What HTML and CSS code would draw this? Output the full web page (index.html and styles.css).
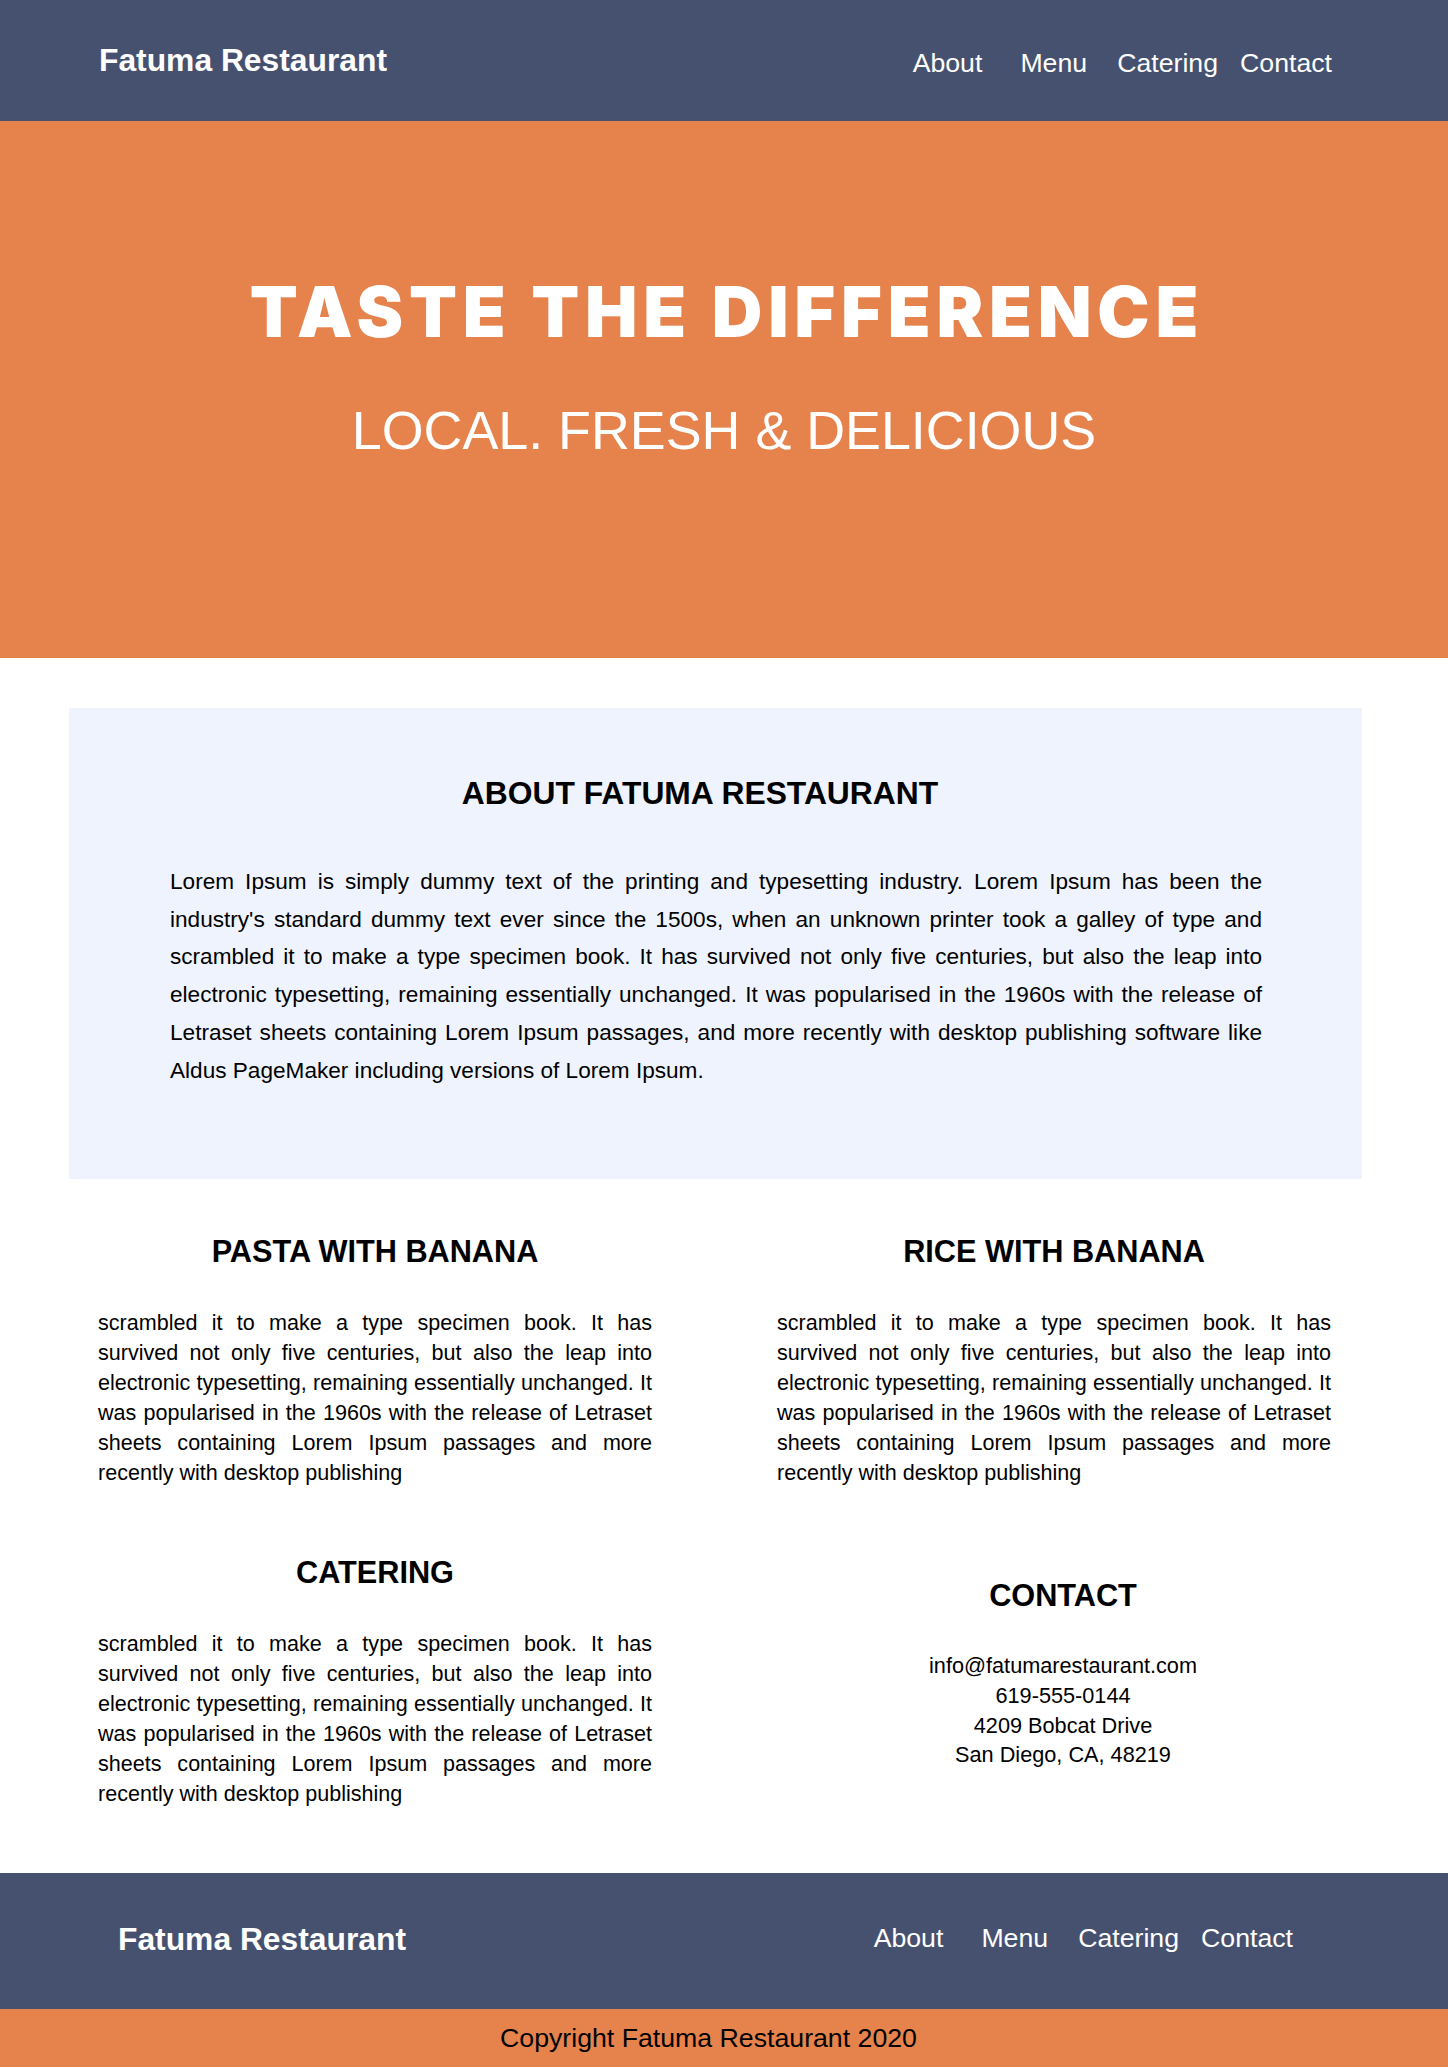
FILE: index.html
```html
<!DOCTYPE html>
<html lang="en">
<head>
<meta charset="utf-8">
<title>Fatuma Restaurant</title>
<link rel="stylesheet" href="styles.css">
</head>
<body>
<header class="topbar">
  <div class="brand">Fatuma Restaurant</div>
  <nav class="nav">
    <a class="nav-link" href="#">About</a>
    <a class="nav-link gap-a" href="#">Menu</a>
    <a class="nav-link gap-b" href="#">Catering</a>
    <a class="nav-link gap-c" href="#">Contact</a>
  </nav>
</header>

<section class="hero">
  <h1 class="hero-title">TASTE THE DIFFERENCE</h1>
  <p class="hero-sub">LOCAL. FRESH &amp; DELICIOUS</p>
</section>

<main class="content">
  <section class="about">
    <h2 class="about-title">ABOUT FATUMA RESTAURANT</h2>
    <p class="about-text">Lorem Ipsum is simply dummy text of the printing and typesetting industry. Lorem Ipsum has been the industry's standard dummy text ever since the 1500s, when an unknown printer took a galley of type and scrambled it to make a type specimen book. It has survived not only five centuries, but also the leap into electronic typesetting, remaining essentially unchanged. It was popularised in the 1960s with the release of Letraset sheets containing Lorem Ipsum passages, and more recently with desktop publishing software like Aldus PageMaker including versions of Lorem Ipsum.</p>
  </section>

  <div class="cards">
    <article class="card">
      <h3 class="card-title">PASTA WITH BANANA</h3>
      <p class="card-text">scrambled it to make a type specimen book. It has survived not only five centuries, but also the leap into electronic typesetting, remaining essentially unchanged. It was popularised in the 1960s with the release of Letraset sheets containing Lorem Ipsum passages and more recently with desktop publishing</p>
    </article>
    <article class="card">
      <h3 class="card-title">RICE WITH BANANA</h3>
      <p class="card-text">scrambled it to make a type specimen book. It has survived not only five centuries, but also the leap into electronic typesetting, remaining essentially unchanged. It was popularised in the 1960s with the release of Letraset sheets containing Lorem Ipsum passages and more recently with desktop publishing</p>
    </article>
    <article class="card">
      <h3 class="card-title">CATERING</h3>
      <p class="card-text">scrambled it to make a type specimen book. It has survived not only five centuries, but also the leap into electronic typesetting, remaining essentially unchanged. It was popularised in the 1960s with the release of Letraset sheets containing Lorem Ipsum passages and more recently with desktop publishing</p>
    </article>
    <article class="card contact">
      <h3 class="card-title">CONTACT</h3>
      <div class="contact-lines">
        <div>info@fatumarestaurant.com</div>
        <div>619-555-0144</div>
        <div>4209 Bobcat Drive</div>
        <div>San Diego, CA, 48219</div>
      </div>
    </article>
  </div>
</main>

<footer class="footer">
  <div class="footer-bar">
    <div class="brand footer-brand">Fatuma Restaurant</div>
    <nav class="nav footer-nav">
      <a class="nav-link" href="#">About</a>
      <a class="nav-link gap-a" href="#">Menu</a>
      <a class="nav-link gap-b" href="#">Catering</a>
      <a class="nav-link gap-c" href="#">Contact</a>
    </nav>
  </div>
  <div class="copyright">Copyright Fatuma Restaurant 2020</div>
</footer>
</body>
</html>
```

FILE: styles.css
```css
* { box-sizing: border-box; }

html, body {
  margin: 0;
  padding: 0;
}

body {
  font-family: "Liberation Sans", Arial, sans-serif;
  color: #000;
  background: #fff;
}

h1, h2, h3, p { margin: 0; }

/* ---------- header ---------- */
.topbar {
  height: 121px;
  background: #46516f;
  display: flex;
  justify-content: space-between;
  align-items: flex-start;
  padding: 0 116px 0 99px;
}

.brand {
  color: #fff;
  font-weight: bold;
  font-size: 31.8px;
  line-height: 32px;
  margin-top: 44px;
  white-space: nowrap;
}

.nav {
  display: flex;
  margin-top: 50px;
}

.nav-link {
  color: #fff;
  text-decoration: none;
  font-size: 26.7px;
  line-height: 26.7px;
  white-space: nowrap;
}

.gap-a { margin-left: 38px; }
.gap-b { margin-left: 30px; }
.gap-c { margin-left: 22px; }

/* ---------- hero ---------- */
.hero {
  height: 537px;
  background: #e6834d;
  padding-top: 151px;
  text-align: center;
  color: #fff;
}

.hero-title {
  font-family: "Arial Black", "Inter", sans-serif;
  font-weight: 900;
  font-size: 70px;
  line-height: 80px;
  letter-spacing: 5.8px;
  padding-left: 5.8px;
}

.hero-sub {
  font-size: 53.8px;
  line-height: 60px;
  margin-top: 48px;
}

/* ---------- about ---------- */
.content {
  padding: 50px 0 64px;
}

.about {
  margin-left: 69px;
  width: 1293px;
  background: #eff3fe;
  padding: 67px 100px 90px 101px;
}

.about-title {
  text-align: center;
  font-weight: bold;
  font-size: 31.8px;
  line-height: 36px;
  padding-right: 32px;
}

.about-text {
  margin-top: 52px;
  font-size: 22.6px;
  line-height: 37.7px;
  text-align: justify;
}

/* ---------- cards ---------- */
.cards {
  display: grid;
  grid-template-columns: 554px 554px;
  column-gap: 125px;
  row-gap: 68px;
  padding-left: 98px;
  margin-top: 56px;
}

.card-title {
  text-align: center;
  font-weight: bold;
  font-size: 30.7px;
  line-height: 34px;
}

.card-text {
  margin-top: 39px;
  font-size: 21.55px;
  line-height: 30px;
  text-align: justify;
}

.contact {
  margin-top: 23px;
  margin-left: 18px;
}

.contact-lines {
  margin-top: 38px;
  text-align: center;
  font-size: 21.7px;
  line-height: 29.7px;
}

/* ---------- footer ---------- */
.footer-bar {
  height: 136px;
  background: #46516f;
  display: flex;
  justify-content: space-between;
  align-items: flex-start;
  padding: 0 155px 0 118px;
}

.footer-brand {
  margin-top: 50px;
}

.footer-nav {
  margin-top: 52px;
}

.copyright {
  height: 58px;
  background: #e6834d;
  text-align: center;
  font-size: 26.7px;
  line-height: 58px;
  padding-right: 31px;
  color: #000;
}
```
